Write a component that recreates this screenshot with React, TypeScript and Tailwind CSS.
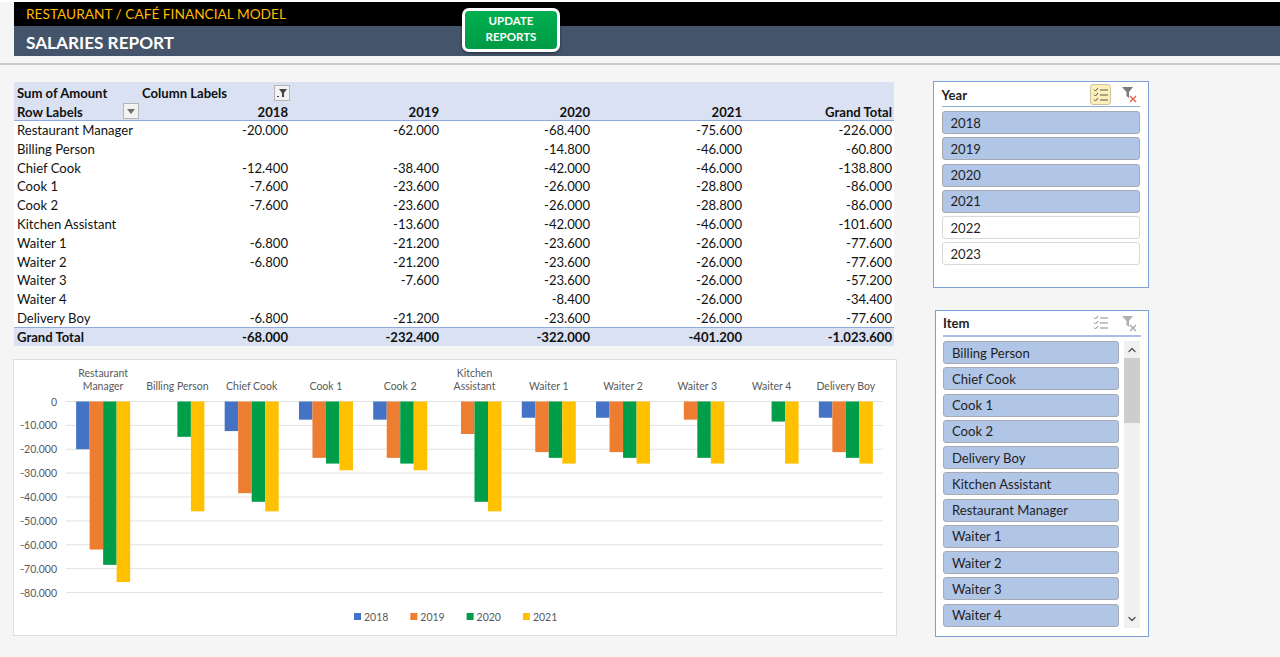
import React from 'react';
import { ChevronUp, ChevronDown } from 'lucide-react';

const years = ['2018', '2019', '2020', '2021'];
const barColors = ['#4472c4', '#ed7d31', '#009e49', '#ffc000'];

const rows: [string, string, string, string, string, string][] = [
  ['Restaurant Manager', '-20.000', '-62.000', '-68.400', '-75.600', '-226.000'],
  ['Billing Person', '', '', '-14.800', '-46.000', '-60.800'],
  ['Chief Cook', '-12.400', '-38.400', '-42.000', '-46.000', '-138.800'],
  ['Cook 1', '-7.600', '-23.600', '-26.000', '-28.800', '-86.000'],
  ['Cook 2', '-7.600', '-23.600', '-26.000', '-28.800', '-86.000'],
  ['Kitchen Assistant', '', '-13.600', '-42.000', '-46.000', '-101.600'],
  ['Waiter 1', '-6.800', '-21.200', '-23.600', '-26.000', '-77.600'],
  ['Waiter 2', '-6.800', '-21.200', '-23.600', '-26.000', '-77.600'],
  ['Waiter 3', '', '-7.600', '-23.600', '-26.000', '-57.200'],
  ['Waiter 4', '', '', '-8.400', '-26.000', '-34.400'],
  ['Delivery Boy', '-6.800', '-21.200', '-23.600', '-26.000', '-77.600'],
];

const chartGroups: { label: string[]; values: number[] }[] = [
  { label: ['Restaurant', 'Manager'], values: [20, 62, 68.4, 75.6] },
  { label: ['Billing Person'], values: [0, 0, 14.8, 46] },
  { label: ['Chief Cook'], values: [12.4, 38.4, 42, 46] },
  { label: ['Cook 1'], values: [7.6, 23.6, 26, 28.8] },
  { label: ['Cook 2'], values: [7.6, 23.6, 26, 28.8] },
  { label: ['Kitchen', 'Assistant'], values: [0, 13.6, 42, 46] },
  { label: ['Waiter 1'], values: [6.8, 21.2, 23.6, 26] },
  { label: ['Waiter 2'], values: [6.8, 21.2, 23.6, 26] },
  { label: ['Waiter 3'], values: [0, 7.6, 23.6, 26] },
  { label: ['Waiter 4'], values: [0, 0, 8.4, 26] },
  { label: ['Delivery Boy'], values: [6.8, 21.2, 23.6, 26] },
];

const cols = 'grid grid-cols-[125px_151px_151px_151px_152px_150px]';

function MultiSelectIcon({ color }: { color: string }) {
  return (
    <svg width="16" height="16" viewBox="0 0 16 16" fill="none" stroke={color} strokeWidth="1">
      <path d="M1 2.500l1.500 1.500L5 1M1 7.500L2.500 9 5 6M1 12.500L2.500 14 5 11" />
      <path d="M7 3h8M7 8h8M7 13h8" />
    </svg>
  );
}

function ClearFilterIcon({ active }: { active: boolean }) {
  return (
    <svg width="16" height="17" viewBox="0 0 16 17">
      <path d="M0 1h11L7 6v6L4.500 10V6z" fill={active ? '#7a7a7a' : '#b0b0b0'} />
      <path d="M8 10l6 6M14 10l-6 6" stroke={active ? '#e2603f' : '#a6a6a6'} strokeWidth="1.300" fill="none" />
    </svg>
  );
}

function SlicerButton({ label, selected }: { label: string; selected: boolean }) {
  return (
    <div
      className={
        selected
          ? 'h-[23px] flex items-center pl-[8px] pt-[2px] rounded-[3px] bg-[#b1c5e7] border border-[#a5a9b2] text-[#1f1f1f]'
          : 'h-[23px] flex items-center pl-[8px] pt-[2px] rounded-[3px] bg-white border border-[#d9d9d9] text-[#1f1f1f]'
      }
    >
      {label}
    </div>
  );
}

function YearSlicer() {
  return (
    <div className="w-[216px] h-[207px] bg-white border border-[#7f9fd8] pl-[7.500px] pr-[8px]">
      <div className="h-[24px] mt-px flex items-center border-b border-[#8eaadb] font-bold text-[#1f1f1f]">
        <span className="flex-1 pt-[3px]">Year</span>
        <span className="w-[21px] h-[21px] flex items-center justify-center rounded-[3px] bg-[#fdf0b8] border border-[#c9c2a0]">
          <MultiSelectIcon color="#555555" />
        </span>
        <span className="ml-[11px] mr-[2px]">
          <ClearFilterIcon active />
        </span>
      </div>
      <div className="mt-[4px] flex flex-col gap-[3.250px]">
        {['2018', '2019', '2020', '2021', '2022', '2023'].map((y, i) => (
          <SlicerButton key={y} label={y} selected={i < 4} />
        ))}
      </div>
    </div>
  );
}

function ItemSlicer() {
  const items = [
    'Billing Person',
    'Chief Cook',
    'Cook 1',
    'Cook 2',
    'Delivery Boy',
    'Kitchen Assistant',
    'Restaurant Manager',
    'Waiter 1',
    'Waiter 2',
    'Waiter 3',
    'Waiter 4',
  ];
  return (
    <div className="w-[214px] h-[327px] mt-[22px] ml-[2px] bg-white border border-[#7f9fd8] px-[7px]">
      <div className="h-[26px] flex items-center border-b-2 border-[#a9bee6] font-bold text-[#1f1f1f]">
        <span className="flex-1 pt-[2px]">Item</span>
        <span className="mr-[13px]">
          <MultiSelectIcon color="#8a8a8a" />
        </span>
        <span className="mr-[3px]">
          <ClearFilterIcon active={false} />
        </span>
      </div>
      <div className="mt-[4px] flex gap-[5px]">
        <div className="w-[176px] flex flex-col gap-[3.250px]">
          {items.map((s) => (
            <SlicerButton key={s} label={s} selected />
          ))}
        </div>
        <div className="w-[16px] h-[287px] bg-[#f0f0f0] flex flex-col items-center">
          <ChevronUp size={12} strokeWidth={2.500} className="text-[#505050] mt-[3px] mb-[2px]" />
          <div className="w-full h-[65px] bg-[#cdcdcd]" />
          <div className="flex-1" />
          <ChevronDown size={12} strokeWidth={2.500} className="text-[#505050] mb-[3px]" />
        </div>
      </div>
    </div>
  );
}

function PivotTable() {
  return (
    <div className="w-[880px] text-[13.100px] leading-[18.750px] text-[#111111]">
      <div className="h-[39px] bg-[#d9e1f2] border-b border-[#8ea9db] font-bold">
        <div className={`${cols} h-[19.500px] pt-[1px]`}>
          <div className="pl-[3px] pt-[1px]">Sum of Amount</div>
          <div className="flex items-center justify-between">
            <span className="pl-[3px] pt-[1px]">Column Labels</span>
            <span className="w-[16px] h-[16px] bg-[#f2f2f2] border border-[#b5b5b5] flex items-center justify-center">
              <svg width="10" height="10" viewBox="0 0 10 10">
                <path d="M2 1h8L7 5v4H5V5z" fill="#444444" />
                <path d="M0 8h2v1H0z" fill="#444444" />
              </svg>
            </span>
          </div>
        </div>
        <div className={cols}>
          <div className="pl-[3px] flex items-center justify-between">
            <span className="pt-[1px]">Row Labels</span>
            <span className="w-[16px] h-[16px] bg-[#f2f2f2] border border-[#b5b5b5] flex items-center justify-center">
              <svg width="8" height="5" viewBox="0 0 8 5">
                <path d="M0 0h8L4 5z" fill="#6e6e6e" />
              </svg>
            </span>
          </div>
          {[...years, 'Grand Total'].map((y) => (
            <div key={y} className="text-right pr-[2px] pt-[1px]">
              {y}
            </div>
          ))}
        </div>
      </div>
      <div className="bg-white h-[205.500px]">
        {rows.map((r) => (
          <div key={r[0]} className={`${cols} h-[18.800px]`}>
            <div className="pl-[3px] whitespace-nowrap">{r[0]}</div>
            {r.slice(1).map((v, i) => (
              <div key={i} className="text-right pr-[2px]">
                {v}
              </div>
            ))}
          </div>
        ))}
      </div>
      <div className={`${cols} h-[19px] bg-[#d9e1f2] border-t border-[#8ea9db] font-bold`}>
        <div className="pl-[3px]">Grand Total</div>
        {['-68.000', '-232.400', '-322.000', '-401.200', '-1.023.600'].map((v) => (
          <div key={v} className="text-right pr-[2px]">
            {v}
          </div>
        ))}
      </div>
    </div>
  );
}

function SalariesChart() {
  const left = 52;
  const right = 869;
  const zero = 41.500;
  const scale = 2.388;
  const groupWidth = (right - left) / 11;
  const barWidth = 13.500;
  const gridVals = [0, 10, 20, 30, 40, 50, 60, 70, 80];
  return (
    <div className="w-[884px] h-[277px] -ml-px mt-[13px] bg-white border border-[#dedede]">
      <svg width="882" height="275" viewBox="0 0 882 275" fontFamily="Lato, sans-serif" fontSize="10.500" fill="#595959">
        {gridVals.map((g) => (
          <g key={g}>
            <line x1={left} x2={right} y1={zero + g * scale} y2={zero + g * scale} stroke="#e2e2e2" strokeWidth="1" />
            <text x={43} y={zero + g * scale + 4} textAnchor="end">
              {g === 0 ? '0' : `-${g}.000`}
            </text>
          </g>
        ))}
        {chartGroups.map((group, i) => {
          const cx = left + groupWidth * (i + 0.5);
          return (
            <g key={group.label.join(' ')}>
              {group.label.map((l, j) => (
                <text key={l} x={cx} y={30 - (group.label.length - 1 - j) * 13} textAnchor="middle">
                  {l}
                </text>
              ))}
              {group.values.map((v, k) =>
                v > 0 ? (
                  <rect
                    key={k}
                    x={cx - 2 * barWidth + k * barWidth}
                    y={zero}
                    width={barWidth}
                    height={v * scale}
                    fill={barColors[k]}
                  />
                ) : null,
              )}
            </g>
          );
        })}
        {years.map((y, i) => (
          <g key={y}>
            <rect x={340 + i * 56.300} y={253} width={7} height={7} fill={barColors[i]} />
            <text x={350 + i * 56.300} y={261}>
              {y}
            </text>
          </g>
        ))}
      </svg>
    </div>
  );
}

export default function App() {
  return (
    <div className="relative w-[1280px] h-[657px] overflow-hidden bg-[#f5f5f5] font-['Lato',sans-serif] text-[13.100px]">
      <div className="h-[65px] bg-[#f5f5f5] border-b-2 border-[#c8c8c8] pl-[14px]">
        <div className="h-[2px] -ml-[14px] bg-white" />
        <div className="h-[24px] bg-black pl-[12px] flex items-center text-[#ffb900] text-[13.700px]">
          RESTAURANT / CAFÉ FINANCIAL MODEL
        </div>
        <div className="h-[30px] bg-[#44546a] pl-[12px] pt-[4px] flex items-center text-white font-bold text-[17.200px]">
          SALARIES REPORT
        </div>
      </div>

      {/* macro button sits over both header bars */}
      <div className="absolute left-[462px] top-[8px] w-[98px] h-[44px] pb-[2px] rounded-[7px] border-[3px] border-white bg-gradient-to-b from-[#00b050] to-[#009a45] shadow-[0_1px_3px_rgba(0,0,0,0.5)] flex flex-col items-center justify-center text-white font-bold text-[11.500px] leading-[16px]">
        <span>UPDATE</span>
        <span>REPORTS</span>
      </div>

      <div className="flex">
        <div className="pl-[14px] pt-[17px] w-[933px]">
          <PivotTable />
          <SalariesChart />
        </div>
        <div className="pt-[16px]">
          <YearSlicer />
          <ItemSlicer />
        </div>
      </div>
    </div>
  );
}
